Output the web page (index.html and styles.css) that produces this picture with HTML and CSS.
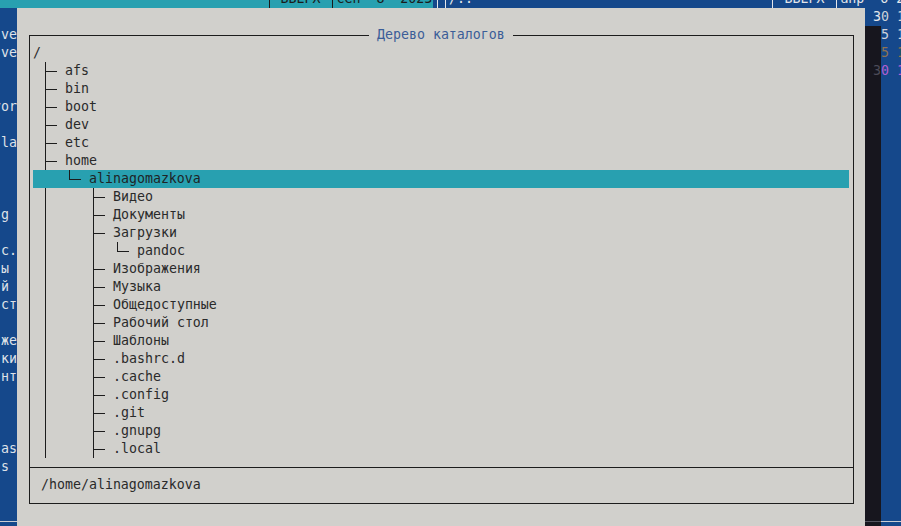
FILE: index.html
```html
<!DOCTYPE html>
<html lang="ru">
<head>
<meta charset="utf-8">
<title>Дерево каталогов</title>
<link rel="stylesheet" href="styles.css">
</head>
<body>
<div class="screen">
  <div class="topbar">
    <div class="seg-left"><span class="txt">                                 </span><i class="bar"></i><span class="txt"> ВВЕРХ </span><i class="bar"></i><span class="txt">сен  8  2023</span></div>
    <div class="seg-right"><i class="bar"></i><i class="bar"></i><span class="txt">/..                                     </span><i class="bar"></i><span class="txt"> ВВЕРХ </span><i class="bar"></i><span class="txt">апр  6 2023</span></div>
  </div>
  <div class="main">
    <div class="lpanel">
      <div class="lrow"></div>
      <div class="lrow">ve</div>
      <div class="lrow">ve</div>
      <div class="lrow"></div>
      <div class="lrow"></div>
      <div class="lrow">vor</div>
      <div class="lrow"></div>
      <div class="lrow">la</div>
      <div class="lrow"></div>
      <div class="lrow"></div>
      <div class="lrow"></div>
      <div class="lrow">g </div>
      <div class="lrow"></div>
      <div class="lrow">c.</div>
      <div class="lrow">ы </div>
      <div class="lrow">й </div>
      <div class="lrow">ст</div>
      <div class="lrow"></div>
      <div class="lrow">же</div>
      <div class="lrow">ки</div>
      <div class="lrow">нт</div>
      <div class="lrow"></div>
      <div class="lrow"></div>
      <div class="lrow"></div>
      <div class="lrow">as</div>
      <div class="lrow">s </div>
      <div class="lrow"></div>
      <div class="lrow"></div>
      <div class="lrow rule"></div>
    </div>

    <div class="dialog">
      <div class="frame">
        <div class="title"> Дерево каталогов </div>
        <div class="tree">
          <div class="trow"><span class="name">/</span></div>
          <div class="trow"><i class="c"></i><i class="c t"></i><i class="c h"></i><i class="c"></i><span class="name">afs</span></div>
          <div class="trow"><i class="c"></i><i class="c t"></i><i class="c h"></i><i class="c"></i><span class="name">bin</span></div>
          <div class="trow"><i class="c"></i><i class="c t"></i><i class="c h"></i><i class="c"></i><span class="name">boot</span></div>
          <div class="trow"><i class="c"></i><i class="c t"></i><i class="c h"></i><i class="c"></i><span class="name">dev</span></div>
          <div class="trow"><i class="c"></i><i class="c t"></i><i class="c h"></i><i class="c"></i><span class="name">etc</span></div>
          <div class="trow"><i class="c"></i><i class="c t"></i><i class="c h"></i><i class="c"></i><span class="name">home</span></div>
          <div class="trow sel"><i class="c w4"></i><i class="c l"></i><i class="c h"></i><i class="c"></i><span class="name">alinagomazkova</span></div>
          <div class="trow"><i class="c"></i><i class="c v"></i><i class="c w5"></i><i class="c t"></i><i class="c h"></i><i class="c"></i><span class="name">Видео</span></div>
          <div class="trow"><i class="c"></i><i class="c v"></i><i class="c w5"></i><i class="c t"></i><i class="c h"></i><i class="c"></i><span class="name">Документы</span></div>
          <div class="trow"><i class="c"></i><i class="c v"></i><i class="c w5"></i><i class="c t"></i><i class="c h"></i><i class="c"></i><span class="name">Загрузки</span></div>
          <div class="trow"><i class="c"></i><i class="c v"></i><i class="c w5"></i><i class="c v"></i><i class="c w2"></i><i class="c l"></i><i class="c h"></i><i class="c"></i><span class="name">pandoc</span></div>
          <div class="trow"><i class="c"></i><i class="c v"></i><i class="c w5"></i><i class="c t"></i><i class="c h"></i><i class="c"></i><span class="name">Изображения</span></div>
          <div class="trow"><i class="c"></i><i class="c v"></i><i class="c w5"></i><i class="c t"></i><i class="c h"></i><i class="c"></i><span class="name">Музыка</span></div>
          <div class="trow"><i class="c"></i><i class="c v"></i><i class="c w5"></i><i class="c t"></i><i class="c h"></i><i class="c"></i><span class="name">Общедоступные</span></div>
          <div class="trow"><i class="c"></i><i class="c v"></i><i class="c w5"></i><i class="c t"></i><i class="c h"></i><i class="c"></i><span class="name">Рабочий стол</span></div>
          <div class="trow"><i class="c"></i><i class="c v"></i><i class="c w5"></i><i class="c t"></i><i class="c h"></i><i class="c"></i><span class="name">Шаблоны</span></div>
          <div class="trow"><i class="c"></i><i class="c v"></i><i class="c w5"></i><i class="c t"></i><i class="c h"></i><i class="c"></i><span class="name">.bashrc.d</span></div>
          <div class="trow"><i class="c"></i><i class="c v"></i><i class="c w5"></i><i class="c t"></i><i class="c h"></i><i class="c"></i><span class="name">.cache</span></div>
          <div class="trow"><i class="c"></i><i class="c v"></i><i class="c w5"></i><i class="c t"></i><i class="c h"></i><i class="c"></i><span class="name">.config</span></div>
          <div class="trow"><i class="c"></i><i class="c v"></i><i class="c w5"></i><i class="c t"></i><i class="c h"></i><i class="c"></i><span class="name">.git</span></div>
          <div class="trow"><i class="c"></i><i class="c v"></i><i class="c w5"></i><i class="c t"></i><i class="c h"></i><i class="c"></i><span class="name">.gnupg</span></div>
          <div class="trow"><i class="c"></i><i class="c v"></i><i class="c w5"></i><i class="c t"></i><i class="c h"></i><i class="c"></i><span class="name">.local</span></div>
        </div>
        <div class="path">/home/alinagomazkova</div>
      </div>
    </div>

    <div class="rpanel">
      <div class="rrow"><span class="sh lit"> 3</span><span class="rb">0 1</span></div>
      <div class="rrow"><span class="sh"></span><span class="rb">5 1</span></div>
      <div class="rrow"><span class="sh"></span><span class="rb brown">5 1</span></div>
      <div class="rrow"><span class="sh"> 3</span><span class="rb purple">0 1</span></div>
      <div class="rrow"><span class="sh"></span><span class="rb"></span></div>
      <div class="rrow"><span class="sh"></span><span class="rb"></span></div>
      <div class="rrow"><span class="sh"></span><span class="rb"></span></div>
      <div class="rrow"><span class="sh"></span><span class="rb"></span></div>
      <div class="rrow"><span class="sh"></span><span class="rb"></span></div>
      <div class="rrow"><span class="sh"></span><span class="rb"></span></div>
      <div class="rrow"><span class="sh"></span><span class="rb"></span></div>
      <div class="rrow"><span class="sh"></span><span class="rb"></span></div>
      <div class="rrow"><span class="sh"></span><span class="rb"></span></div>
      <div class="rrow"><span class="sh"></span><span class="rb"></span></div>
      <div class="rrow"><span class="sh"></span><span class="rb"></span></div>
      <div class="rrow"><span class="sh"></span><span class="rb"></span></div>
      <div class="rrow"><span class="sh"></span><span class="rb"></span></div>
      <div class="rrow"><span class="sh"></span><span class="rb"></span></div>
      <div class="rrow"><span class="sh"></span><span class="rb"></span></div>
      <div class="rrow"><span class="sh"></span><span class="rb"></span></div>
      <div class="rrow"><span class="sh"></span><span class="rb"></span></div>
      <div class="rrow"><span class="sh"></span><span class="rb"></span></div>
      <div class="rrow"><span class="sh"></span><span class="rb"></span></div>
      <div class="rrow"><span class="sh"></span><span class="rb"></span></div>
      <div class="rrow"><span class="sh"></span><span class="rb"></span></div>
      <div class="rrow"><span class="sh"></span><span class="rb"></span></div>
      <div class="rrow"><span class="sh"></span><span class="rb"></span></div>
      <div class="rrow"><span class="sh"></span><span class="rb"></span></div>
      <div class="rrow rule"><span class="sh"></span><span class="rb"></span></div>
    </div>
  </div>
</div>
</body>
</html>
```
FILE: styles.css
```css
html, body {
  margin: 0;
  padding: 0;
  width: 901px;
  height: 526px;
  overflow: hidden;
  background: #15488b;
}

.screen {
  margin-top: -10px;
  display: flex;
  flex-direction: column;
  font-family: "DejaVu Sans Mono", "Liberation Mono", monospace;
  font-size: 13.288px;
  line-height: 18px;
}

/* text cells keep their spaces like a terminal */
.txt, .lrow, .name, .title, .path, .sh, .rb {
  white-space: pre;
}

/* top row (partially visible) */
.topbar {
  display: flex;
  height: 18px;
}
.seg-left {
  width: 432px;
  padding-left: 1px;
  background: #28a0b0;
  color: #1b1b1b;
  display: flex;
  flex: none;
}
.seg-right {
  flex: 1;
  display: flex;
  color: #e4e6ea;
  background: #15488b;
}
.txt {
  flex: none;
}
.bar {
  flex: none;
  width: 8px;
  height: 18px;
  position: relative;
}
.bar::before {
  content: "";
  position: absolute;
  left: 4px;
  top: 0;
  bottom: 0;
  width: 1px;
  background: currentColor;
}

.main {
  display: flex;
  height: 522px;
}

/* left file panel fragment */
.lpanel {
  width: 17px;
  flex: none;
  overflow: hidden;
  color: #dfe2e8;
  display: flex;
  flex-direction: column;
}
.lrow {
  height: 18px;
  flex: none;
  display: flex;
  justify-content: flex-end;
  position: relative;
}
.lrow.rule::after {
  content: "";
  position: absolute;
  left: 0;
  right: 0;
  top: 9px;
  height: 1px;
  background: #c9ccd3;
}

/* dialog */
.dialog {
  width: 848px;
  flex: none;
  background: #d1d0cc;
  color: #2a2a2a;
  padding-top: 27px;
  box-sizing: border-box;
}
.frame {
  position: relative;
  margin: 0 11px 0 12px;
  border: 1px solid #1c1c1c;
  padding: 8px 4px 0 3px;
}
.title {
  position: absolute;
  top: -10px;
  left: 339px;
  height: 18px;
  background: #d1d0cc;
  color: #3b5d98;
}

.tree {
  display: flex;
  flex-direction: column;
}
.trow {
  display: flex;
  height: 18px;
}
.trow.sel {
  background: #28a0b0;
  color: #1e2426;
}
.c {
  flex: none;
  width: 8px;
  height: 18px;
  position: relative;
}
.c.w2 { width: 16px; }
.c.w4 { width: 32px; }
.c.w5 { width: 40px; }
.c.v::before,
.c.t::before,
.c.l::before {
  content: "";
  position: absolute;
  left: 4px;
  top: 0;
  bottom: 0;
  width: 1px;
  background: #1c1c1c;
}
.c.l::before {
  bottom: auto;
  height: 10px;
}
.c.t::after,
.c.l::after,
.c.h::after {
  content: "";
  position: absolute;
  left: 4px;
  right: 0;
  top: 9px;
  height: 1px;
  background: #1c1c1c;
}
.c.h::after {
  left: 0;
}
.name {
  flex: none;
}

.path {
  margin: 9px -4px 0 -3px;
  border-top: 1px solid #1c1c1c;
  padding: 8px 0 9px 11px;
  height: 18px;
}

/* right panel fragment with dialog shadow */
.rpanel {
  flex: 1;
  display: flex;
  flex-direction: column;
  overflow: hidden;
}
.rrow {
  height: 18px;
  flex: none;
  display: flex;
  position: relative;
}
.sh {
  width: 16px;
  flex: none;
  background: #17161e;
  color: #4c4b58;
}
.sh.lit {
  background: #15488b;
  color: #e4e6ea;
}
.rb {
  flex: 1;
  background: #15488b;
  color: #cfd3da;
}
.rb.brown { color: #8e7352; }
.rb.purple { color: #b15fd0; }
.rrow.rule .sh,
.rrow.rule .rb {
  position: relative;
}
.rrow.rule .sh::after,
.rrow.rule .rb::after {
  content: "";
  position: absolute;
  left: 0;
  right: 0;
  top: 9px;
  height: 1px;
  background: #c9ccd3;
}
.rrow.rule .sh::after {
  background: #55545f;
}
```
